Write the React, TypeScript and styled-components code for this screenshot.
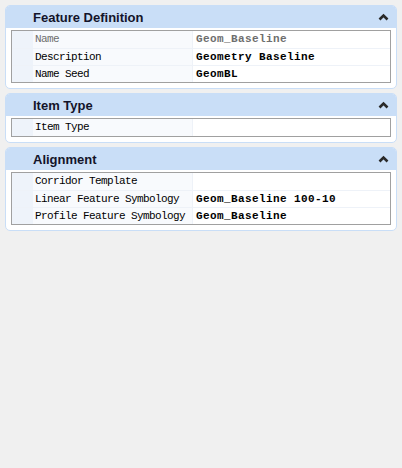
import React from "react";
import styled, { createGlobalStyle } from "styled-components";

const Global = createGlobalStyle`
  html, body { margin: 0; padding: 0; background: #f0f0f0; }
  body { width: 402px; height: 468px; overflow: hidden; }
`;

const Page = styled.div`
  padding: 5px 5px 0 5px;
  display: flex;
  flex-direction: column;
  gap: 4px;
`;

const Panel = styled.section`
  border-radius: 5px;
  background: #ffffff;
  border: 1px solid #c9def7;
  overflow: hidden;
`;

const Header = styled.div`
  height: 22px;
  background: #c9def7;
  display: flex;
  align-items: center;
  justify-content: space-between;
  padding: 0 7px 0 27px;
  font-family: "Liberation Sans", Arial, sans-serif;
  font-weight: bold;
  font-size: 13px;
  color: #14142a;
`;

const Body = styled.div`
  padding: 2px 5px 5px 5px;
`;

const Grid = styled.div`
  border: 1px solid #a0a0a0;
  display: flex;
  flex-direction: column;
`;

const Row = styled.div`
  display: grid;
  grid-template-columns: 21px 160px 1fr;
  height: 17px;
  & + & > div { border-top: 1px solid #eef2f8; }
`;

const Gutter = styled.div`
  background: #eef3fa;
`;

const Label = styled.div<{ $dim?: boolean }>`
  background: #f8fafd;
  border-right: 1px solid #eef2f8;
  font-family: "Liberation Mono", "Courier New", monospace;
  font-size: 11px;
  letter-spacing: -0.6px;
  line-height: 16px;
  padding-left: 2px;
  color: ${(p) => (p.$dim ? "#6e6e6e" : "#000")};
  white-space: nowrap;
  overflow: hidden;
`;

const Value = styled.div<{ $dim?: boolean }>`
  background: #ffffff;
  font-family: "Liberation Mono", "Courier New", monospace;
  font-size: 11px;
  font-weight: bold;
  letter-spacing: 0.4px;
  line-height: 16px;
  padding-left: 3px;
  color: ${(p) => (p.$dim ? "#6e6e6e" : "#000")};
  white-space: nowrap;
  overflow: hidden;
`;

const Chevron = () => (
  <svg width="11" height="8" viewBox="0 0 11 8">
    <polyline points="1.5,6.5 5.5,2.5 9.5,6.5" fill="none" stroke="#2a2a2a" strokeWidth="2.6" strokeLinecap="butt" strokeLinejoin="miter" />
  </svg>
);

type Item = { label: string; value: string; dim?: boolean };

const sections: { title: string; items: Item[] }[] = [
  {
    title: "Feature Definition",
    items: [
      { label: "Name", value: "Geom_Baseline", dim: true },
      { label: "Description", value: "Geometry Baseline" },
      { label: "Name Seed", value: "GeomBL" },
    ],
  },
  { title: "Item Type", items: [{ label: "Item Type", value: "" }] },
  {
    title: "Alignment",
    items: [
      { label: "Corridor Template", value: "" },
      { label: "Linear Feature Symbology", value: "Geom_Baseline 100-10" },
      { label: "Profile Feature Symbology", value: "Geom_Baseline" },
    ],
  },
];

export default function App() {
  return (
    <>
      <Global />
      <Page>
        {sections.map((s) => (
          <Panel key={s.title}>
            <Header>
              <span>{s.title}</span>
              <Chevron />
            </Header>
            <Body>
              <Grid>
                {s.items.map((it) => (
                  <Row key={it.label}>
                    <Gutter />
                    <Label $dim={it.dim}>{it.label}</Label>
                    <Value $dim={it.dim}>{it.value}</Value>
                  </Row>
                ))}
              </Grid>
            </Body>
          </Panel>
        ))}
      </Page>
    </>
  );
}
